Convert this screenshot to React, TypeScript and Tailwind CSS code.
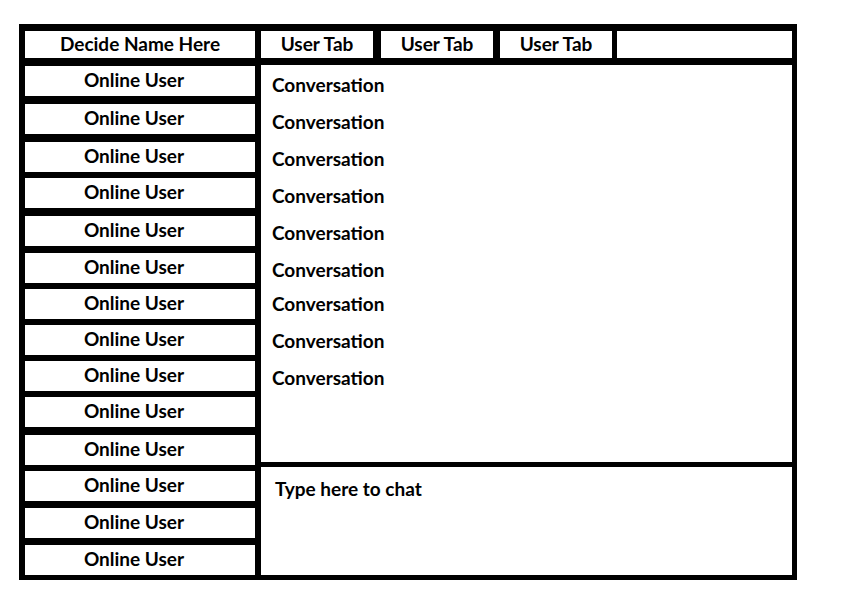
import React from "react";

// Irregular spacing copied from the mockup
const USERS = [
  "mt-[8px]",
  "mt-[8px]",
  "mt-[8px]",
  "mt-[6px]",
  "mt-[8px]",
  "mt-[7px]",
  "mt-[6px]",
  "mt-[6px]",
  "mt-[6px]",
  "mt-[6px]",
  "mt-[8px]",
  "mt-[6px]",
  "mt-[7px]",
  "mt-[7px]",
];

const CONVERSATIONS = [
  "pt-[2px] h-[39px]",
  "h-[37px]",
  "h-[37px]",
  "h-[37px]",
  "h-[37px]",
  "h-[37px]",
  "h-[37px] mt-[-3px]",
  "h-[37px]",
  "h-[37px]",
];

const TABS = [
  { label: "User Tab", cls: "w-[112px]" },
  { label: "User Tab", cls: "w-[112px] ml-[8px]" },
  { label: "User Tab", cls: "w-[112px] ml-[7px]" },
  { label: "", cls: "flex-1 ml-[5px]" },
];

export default function App() {
  return (
    <div className="w-[848px] h-[615px] bg-white font-['Lato','Open_Sans',sans-serif] font-bold text-[19px] leading-none text-black">
      <div className="ml-[19px] mt-[24px] w-[778px] bg-black flex pl-[6px] pt-[7px] pr-[5px] pb-[5px]">
        {/* Left column */}
        <div className="w-[230px] flex flex-col">
          <div className="h-[27px] bg-white flex items-center justify-center pb-[2px]">
            Decide Name Here
          </div>
          {USERS.map((m, i) => (
            <div key={i} className={`h-[30px] bg-white flex items-center justify-center pb-[3px] pr-[12px] ${m}`}>
              Online User
            </div>
          ))}
        </div>

        {/* Right panel */}
        <div className="flex-1 ml-[6px] flex flex-col">
          <div className="h-[27px] flex">
            {TABS.map((t, i) => (
              <div key={i} className={`bg-white flex items-center justify-center pb-[2px] ${t.cls}`}>
                {t.label}
              </div>
            ))}
          </div>
          <div className="mt-[7px] flex-1 bg-white pl-[11px]">
            {CONVERSATIONS.map((c, i) => (
              <div key={i} className={`flex items-center pb-[2px] ${c}`}>
                Conversation
              </div>
            ))}
          </div>
          <div className="mt-[5px] h-[108px] bg-white pl-[14px] pt-[12px]">
            Type here to chat
          </div>
        </div>
      </div>
    </div>
  );
}
